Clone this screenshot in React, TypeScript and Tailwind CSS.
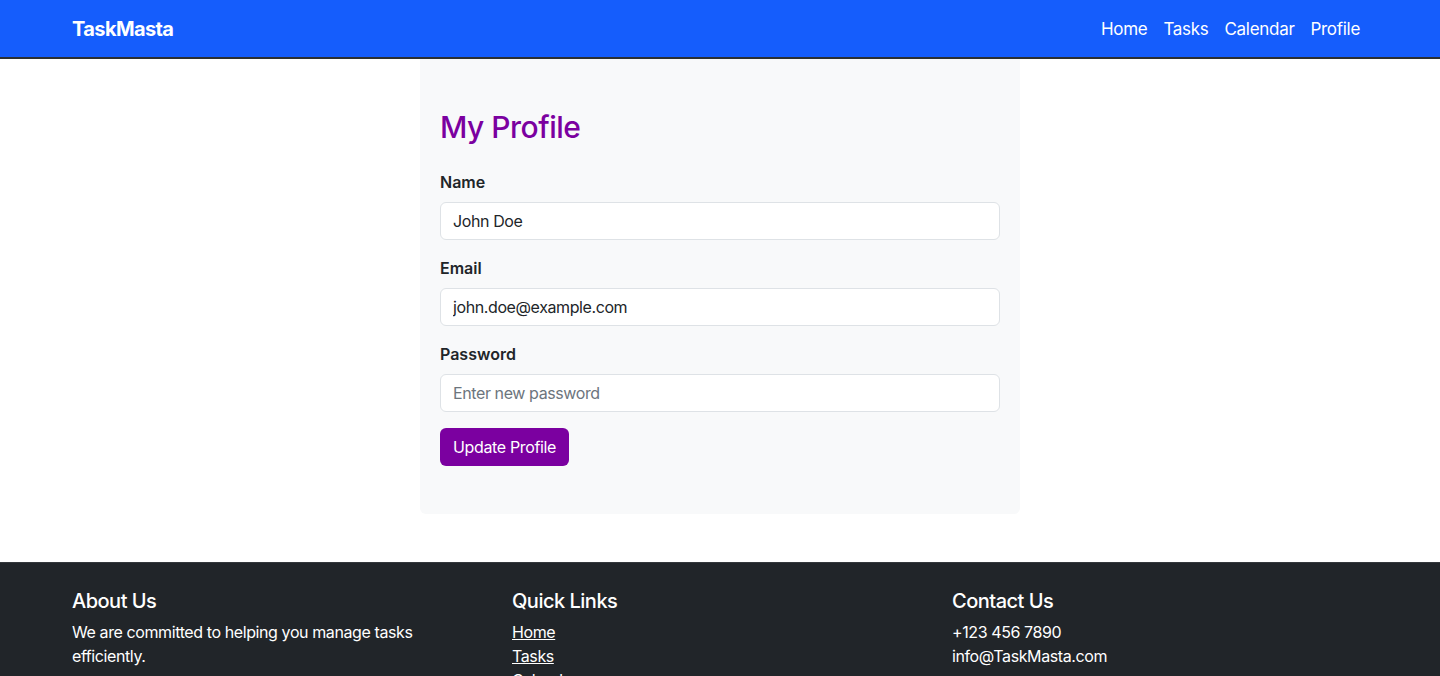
import React from "react";

export default function App() {
  const font = { fontFamily: "Inter, 'Noto Sans', sans-serif" };
  const inputCls =
    "w-full h-[38px] bg-white border border-[#dee2e6] rounded-[6px] px-3 text-[16px] tracking-[-0.4px] text-[#212529] outline-none";
  return (
    <div className="min-h-[676px] bg-white flex flex-col" style={font}>
      <nav className="bg-[#155dfc] h-[59px] border-b-2 border-[#2b2f33]">
        <div className="w-[1320px] mx-auto px-3 h-full flex items-center justify-between">
          <span className="text-white font-bold text-[20px] tracking-[-0.6px]">TaskMasta</span>
          <div className="flex items-center">
            {["Home", "Tasks", "Calendar", "Profile"].map((l) => (
              <a key={l} className="text-white text-[17px] tracking-[-0.3px] px-2 leading-6">{l}</a>
            ))}
          </div>
        </div>
      </nav>

      <main className="flex justify-center">
        <div className="w-[600px] bg-[#f8f9fa] rounded-b-[6px] px-5 pt-[48px] pb-[48px]">
          <h2 className="text-[#7b00a0] text-[30px] tracking-[-0.5px] leading-[40px] font-medium mb-[23px]">My Profile</h2>
          <div className="flex flex-col gap-4">
            <div>
              <label className="block font-semibold text-[16px] leading-6 mb-2 text-[#212529]">Name</label>
              <input defaultValue="John Doe" className={inputCls} />
            </div>
            <div>
              <label className="block font-semibold text-[16px] leading-6 mb-2 text-[#212529]">Email</label>
              <input defaultValue="john.doe@example.com" className={inputCls} />
            </div>
            <div>
              <label className="block font-semibold text-[16px] leading-6 mb-2 text-[#212529]">Password</label>
              <input placeholder="Enter new password" className={inputCls + " placeholder:text-[#6c757d]"} />
            </div>
            <div>
              <button className="bg-[#7b00a0] text-white text-[16px] tracking-[-0.35px] h-[38px] px-[13px] rounded-[6px]">Update Profile</button>
            </div>
          </div>
        </div>
      </main>

      <footer className="mt-[48px] bg-[#212529] border-t border-[#34383c] text-white pt-[26px] flex-1">
        <div className="w-[1320px] mx-auto grid grid-cols-3 tracking-[-0.4px]">
          <div className="px-3">
            <h5 className="text-[20px] leading-6 font-medium mb-[7px] tracking-[-0.5px]">About Us</h5>
            <p className="text-[16px] leading-6 w-[360px]">We are committed to helping you manage tasks efficiently.</p>
          </div>
          <div className="px-3">
            <h5 className="text-[20px] leading-6 font-medium mb-[7px] tracking-[-0.5px]">Quick Links</h5>
            <ul className="text-[16px] leading-6">
              <li><a className="underline">Home</a></li>
              <li><a className="underline">Tasks</a></li>
              <li><a className="underline">Calendar</a></li>
              <li><a className="underline">Profile</a></li>
            </ul>
          </div>
          <div className="px-3">
            <h5 className="text-[20px] leading-6 font-medium mb-[7px] tracking-[-0.5px]">Contact Us</h5>
            <p className="text-[16px] leading-6">+123 456 7890</p>
            <p className="text-[16px] leading-6">info@TaskMasta.com</p>
          </div>
        </div>
      </footer>
    </div>
  );
}
